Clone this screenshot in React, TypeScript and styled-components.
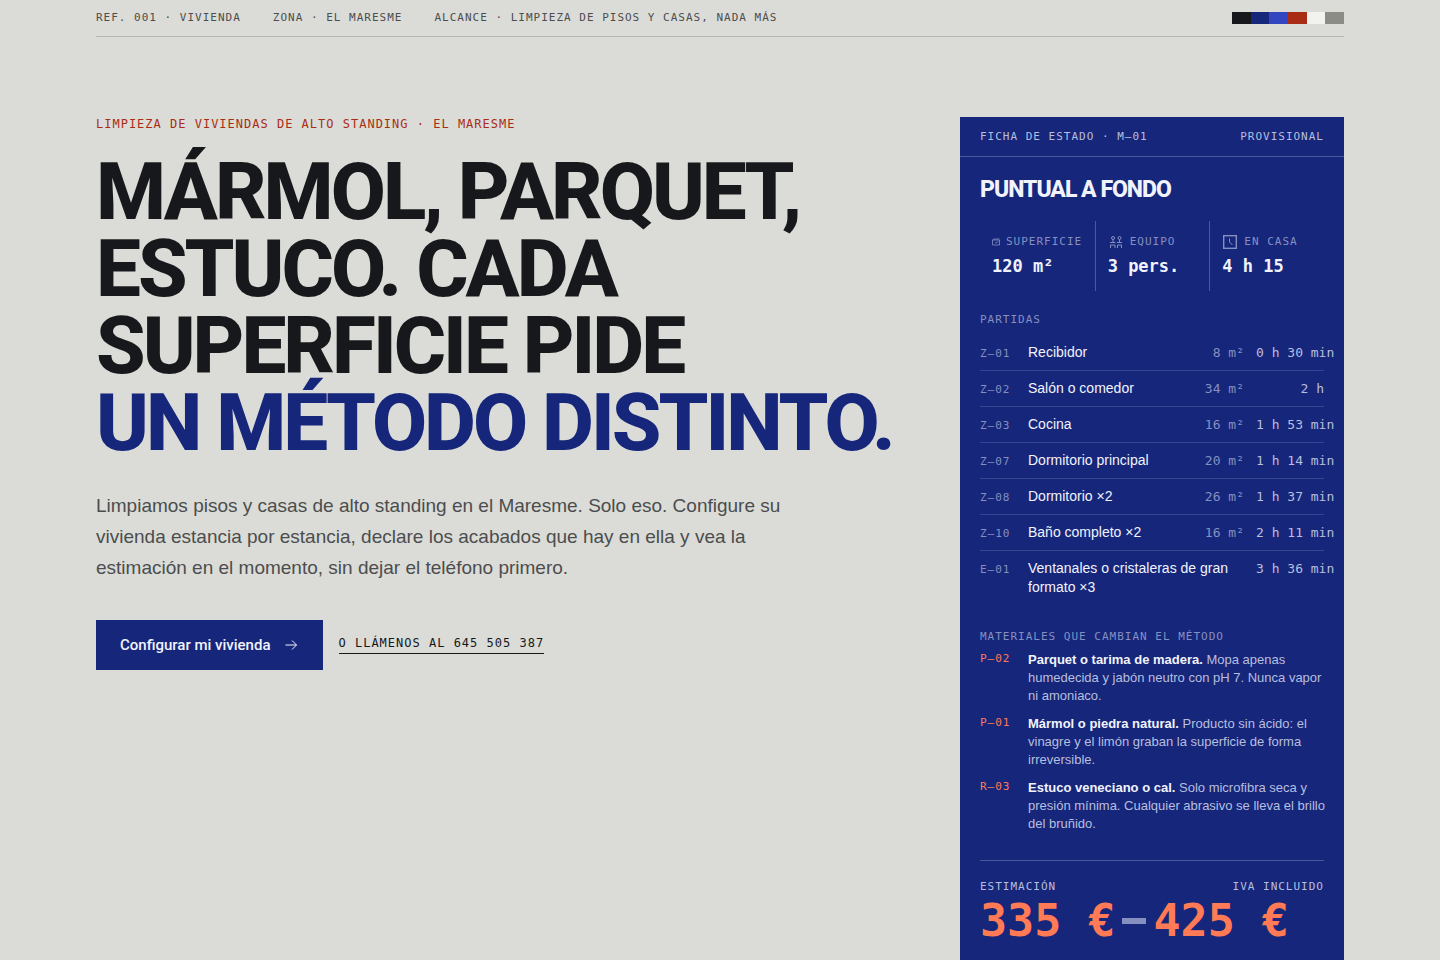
import React from "react";
import styled, { createGlobalStyle } from "styled-components";

const sans = `"Liberation Sans", Arial, sans-serif`;
const display = `Roboto, "Liberation Sans", sans-serif`;
const mono = `"DejaVu Sans Mono", "Liberation Mono", monospace`;

const color = {
  paper: "#dbdcd7",
  ink: "#16181b",
  text: "#4b4d4e",
  rule: "#b6b8b4",
  blue: "#16267b",
  indigo: "#3445c0",
  rust: "#a92d14",
  white: "#f2f3ee",
  grey: "#8b8c86",
  coral: "#ff7a55",
  strong: "#f1f3fb",
  soft: "#b6bfdf",
  dim: "#8590c0",
  line: "#4a58a0",
  faint: "#364490",
};

const GlobalStyle = createGlobalStyle`
  *, *::before, *::after { box-sizing: border-box; }
  body {
    margin: 0;
    background: ${color.paper};
    color: ${color.ink};
    font-family: ${sans};
    -webkit-font-smoothing: antialiased;
  }
  h1, h2, h3, p, ul, dl, dd { margin: 0; padding: 0; }
  ul { list-style: none; }
`;

const Page = styled.div`
  max-width: 1440px;
  margin: 0 auto;
  padding: 0 96px;
`;

const TopBar = styled.header`
  display: flex;
  align-items: center;
  justify-content: space-between;
  height: 37px;
  border-bottom: 1px solid ${color.rule};
`;

const Label = styled.span<{ $tone?: string }>`
  font: 400 11px/16px ${mono};
  letter-spacing: 1px;
  text-transform: uppercase;
  white-space: nowrap;
  color: ${(p) => p.$tone ?? color.text};
`;

const RefList = styled.div`
  display: flex;
  gap: 32px;
`;

const Swatches = styled.div`
  display: flex;
  width: 112px;
  height: 12px;
`;

const Swatch = styled.span<{ $fill: string }>`
  flex: 1;
  background: ${(p) => p.$fill};
`;

const Hero = styled.main`
  display: grid;
  grid-template-columns: minmax(0, 1fr) 384px;
  gap: 64px;
  align-items: start;
  padding: 80px 0 64px;
`;

const Eyebrow = styled.p`
  font: 400 12px/14px ${mono};
  letter-spacing: 1px;
  text-transform: uppercase;
  color: ${color.rust};
`;

const Headline = styled.h1`
  margin-top: 23px;
  font-family: ${display};
  font-weight: 800;
  font-size: 80px;
  line-height: 77px;
  letter-spacing: -3px;
  text-transform: uppercase;
`;

const Accent = styled.span`
  display: block;
  white-space: nowrap;
  color: ${color.blue};
`;

const Lead = styled.p`
  max-width: 704px;
  margin-top: 28px;
  font-size: 19px;
  line-height: 31px;
  color: ${color.text};
`;

const Actions = styled.div`
  display: flex;
  align-items: center;
  gap: 16px;
  margin-top: 37px;
`;

const PrimaryButton = styled.button`
  display: flex;
  align-items: center;
  gap: 12px;
  height: 50px;
  padding: 0 24px;
  border: 0;
  background: ${color.blue};
  color: ${color.strong};
  font: 500 15px/20px ${display};
  cursor: pointer;
`;

const PhoneLink = styled.a`
  padding-bottom: 3px;
  border-bottom: 1px solid ${color.ink};
  font: 400 12px/14px ${mono};
  letter-spacing: 1px;
  text-transform: uppercase;
  text-decoration: none;
  color: ${color.ink};
`;

const Card = styled.aside`
  background: ${color.blue};
  color: ${color.strong};
`;

const Between = styled.div`
  display: flex;
  align-items: center;
  justify-content: space-between;
`;

const CardHead = styled(Between)`
  height: 40px;
  padding: 0 20px;
  border-bottom: 1px solid ${color.line};
`;

const CardBody = styled.div`
  padding: 20px;
`;

const CardTitle = styled.h2`
  font-family: ${display};
  font-weight: 800;
  font-size: 23px;
  line-height: 26px;
  letter-spacing: -1px;
  text-transform: uppercase;
`;

const Stats = styled.dl`
  display: grid;
  grid-template-columns: repeat(3, minmax(0, 1fr));
  margin-top: 18px;
`;

const Stat = styled.div`
  height: 70px;
  padding: 13px 12px 0;
  & + & {
    border-left: 1px solid ${color.line};
  }
`;

const StatLabel = styled.dt`
  display: flex;
  align-items: center;
  gap: 6px;
  color: ${color.dim};
  svg {
    flex: none;
  }
`;

const StatValue = styled.dd`
  margin-top: 4px;
  font: 700 17px/24px ${mono};
  white-space: nowrap;
`;

const Heading = styled.h3`
  display: flex;
  margin-top: 21px;
`;

const Rooms = styled.table`
  width: 100%;
  margin: 7px 0 24px;
  border-collapse: collapse;
  table-layout: fixed;

  td {
    padding: 7px 0 8px;
    vertical-align: baseline;
    line-height: 19px;
  }
  tr + tr td {
    border-top: 1px solid ${color.faint};
  }
`;

const Name = styled.td`
  font-size: 14px;
`;

const Figure = styled.td<{ $tone: string }>`
  font-family: ${mono};
  font-size: 13px;
  text-align: right;
  white-space: nowrap;
  color: ${(p) => p.$tone};
`;

const Materials = styled.ul`
  display: grid;
  gap: 10px;
  margin: 6px -6px 0 0;
`;

const Material = styled.li`
  display: grid;
  grid-template-columns: 36px minmax(0, 1fr);
  gap: 12px;
  font-size: 13px;
  line-height: 18px;
  color: ${color.soft};
  strong {
    color: ${color.strong};
  }
`;

const Estimate = styled.section`
  margin-top: 27px;
  padding-top: 18px;
  border-top: 1px solid ${color.line};
`;

const Price = styled.p`
  display: flex;
  align-items: center;
  gap: 7px;
  margin-top: 3px;
  font: 700 45px/46px ${mono};
  white-space: nowrap;
  color: ${color.coral};
`;

const Dash = styled.span`
  width: 24px;
  height: 6px;
  background: ${color.dim};
`;

const Arrow = () => (
  <svg width="16" height="16" viewBox="0 0 16 16" fill="none" stroke="currentColor" aria-hidden>
    <path d="M2.5 8h11M9 3.5 13.5 8 9 12.5" />
  </svg>
);

const AreaIcon = () => (
  <svg width="8" height="14" viewBox="0 0 8 14" fill="none" stroke="currentColor" strokeWidth=".8" aria-hidden>
    <path d="M.5 5h7v5h-7zM.5 5l1.5-1h5.5M3 7.5 4.5 8l2-2" />
  </svg>
);

const TeamIcon = () => (
  <svg width="16" height="14" viewBox="0 0 16 14" fill="none" stroke="currentColor" aria-hidden>
    <circle cx="5" cy="3" r="1.5" />
    <circle cx="11.5" cy="3" r="1.5" />
    <path d="M2 7.5h5.5M9 7.5h5M2.5 13v-3h4.5v3M9.5 13v-3h4v3M5 4.5v3M11.5 4.5v3" />
  </svg>
);

const ClockIcon = () => (
  <svg width="16" height="16" viewBox="0 0 16 16" fill="none" stroke="currentColor" aria-hidden>
    <rect x="1.7" y="1.7" width="12.6" height="12.6" strokeWidth="1.4" />
    <path d="M7.5 4.5V8l3 3" />
  </svg>
);

const stats = [
  { label: "Superficie", value: "120 m²", icon: <AreaIcon /> },
  { label: "Equipo", value: "3 pers.", icon: <TeamIcon /> },
  { label: "En casa", value: "4 h 15", icon: <ClockIcon /> },
];

const rooms = [
  { code: "Z–01", name: "Recibidor", area: "8 m²", time: "0 h 30 min" },
  { code: "Z–02", name: "Salón o comedor", area: "34 m²", time: "2 h" },
  { code: "Z–03", name: "Cocina", area: "16 m²", time: "1 h 53 min" },
  { code: "Z–07", name: "Dormitorio principal", area: "20 m²", time: "1 h 14 min" },
  { code: "Z–08", name: "Dormitorio ×2", area: "26 m²", time: "1 h 37 min" },
  { code: "Z–10", name: "Baño completo ×2", area: "16 m²", time: "2 h 11 min" },
  { code: "E–01", name: "Ventanales o cristaleras de gran formato ×3", time: "3 h 36 min" },
];

const materials = [
  {
    code: "P–02",
    name: "Parquet o tarima de madera.",
    note: "Mopa apenas humedecida y jabón neutro con pH 7. Nunca vapor ni amoniaco.",
  },
  {
    code: "P–01",
    name: "Mármol o piedra natural.",
    note: "Producto sin ácido: el vinagre y el limón graban la superficie de forma irreversible.",
  },
  {
    code: "R–03",
    name: "Estuco veneciano o cal.",
    note: "Solo microfibra seca y presión mínima. Cualquier abrasivo se lleva el brillo del bruñido.",
  },
];

const palette = [color.ink, color.blue, color.indigo, color.rust, color.white, color.grey];

export default function App() {
  return (
    <>
      <GlobalStyle />
      <Page>
        <TopBar>
          <RefList>
            <Label>Ref. 001 · Vivienda</Label>
            <Label>Zona · El Maresme</Label>
            <Label>Alcance · Limpieza de pisos y casas, nada más</Label>
          </RefList>
          <Swatches aria-hidden>
            {palette.map((fill) => (
              <Swatch key={fill} $fill={fill} />
            ))}
          </Swatches>
        </TopBar>

        <Hero>
          <section>
            <Eyebrow>Limpieza de viviendas de alto standing · El Maresme</Eyebrow>
            <Headline>
              Mármol, parquet, estuco. Cada superficie pide <Accent>un método distinto.</Accent>
            </Headline>
            <Lead>
              Limpiamos pisos y casas de alto standing en el Maresme. Solo eso. Configure su vivienda
              estancia por estancia, declare los acabados que hay en ella y vea la estimación en el
              momento, sin dejar el teléfono primero.
            </Lead>
            <Actions>
              <PrimaryButton type="button">
                Configurar mi vivienda
                <Arrow />
              </PrimaryButton>
              <PhoneLink href="tel:+34645505387">o llámenos al 645 505 387</PhoneLink>
            </Actions>
          </section>

          <Card>
            <CardHead>
              <Label $tone={color.soft}>Ficha de estado · M–01</Label>
              <Label $tone={color.soft}>Provisional</Label>
            </CardHead>
            <CardBody>
              <CardTitle>Puntual a fondo</CardTitle>
              <Stats>
                {stats.map((s) => (
                  <Stat key={s.label}>
                    <StatLabel>
                      {s.icon}
                      <Label $tone={color.dim}>{s.label}</Label>
                    </StatLabel>
                    <StatValue>{s.value}</StatValue>
                  </Stat>
                ))}
              </Stats>

              <Heading>
                <Label $tone={color.dim}>Partidas</Label>
              </Heading>
              <Rooms>
                <colgroup>
                  <col width="48" />
                  <col />
                  <col width="48" />
                  <col width="12" />
                  <col width="68" />
                </colgroup>
                <tbody>
                  {rooms.map((r) => (
                    <tr key={r.code}>
                      <td>
                        <Label $tone={color.dim}>{r.code}</Label>
                      </td>
                      <Name colSpan={r.area ? 1 : 2}>{r.name}</Name>
                      {r.area && <Figure $tone={color.dim}>{r.area}</Figure>}
                      <td />
                      <Figure $tone={color.soft}>{r.time}</Figure>
                    </tr>
                  ))}
                </tbody>
              </Rooms>

              <Heading>
                <Label $tone={color.dim}>Materiales que cambian el método</Label>
              </Heading>
              <Materials>
                {materials.map((m) => (
                  <Material key={m.code}>
                    <Label $tone={color.coral}>{m.code}</Label>
                    <span>
                      <strong>{m.name}</strong> {m.note}
                    </span>
                  </Material>
                ))}
              </Materials>

              <Estimate>
                <Between>
                  <Label $tone={color.soft}>Estimación</Label>
                  <Label $tone={color.soft}>IVA incluido</Label>
                </Between>
                <Price>
                  335 €<Dash />
                  425 €
                </Price>
              </Estimate>
            </CardBody>
          </Card>
        </Hero>
      </Page>
    </>
  );
}
